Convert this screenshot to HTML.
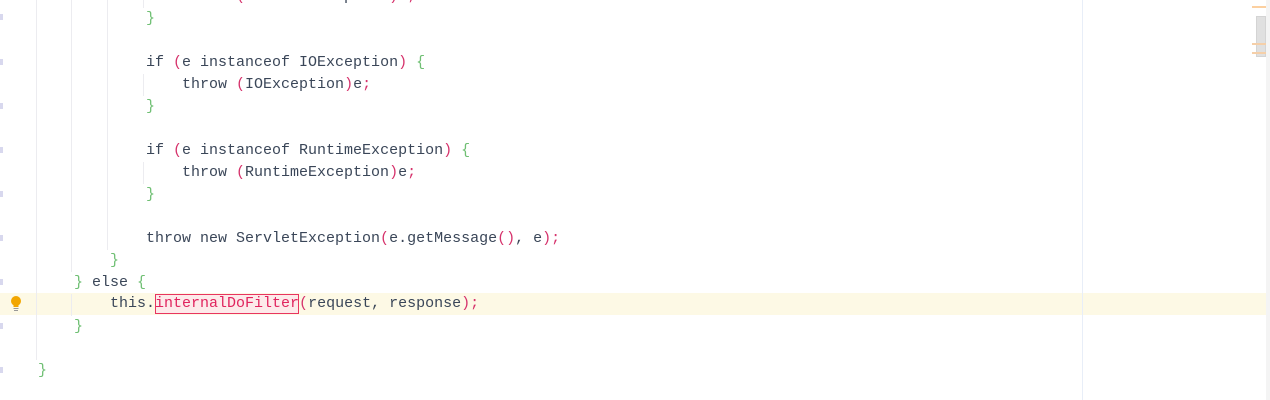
<!DOCTYPE html>
<html><head><style>
body{margin:0;width:1270px;height:400px;background:#fff;overflow:hidden;position:relative;font-family:"Liberation Mono",monospace;font-size:15px;}
.r{position:absolute;left:38px;height:22px;line-height:22px;white-space:pre;color:#3a4658;margin-top:1px}
.p{color:#d6336c}.b{color:#6fbf73}.s{color:#d6336c}
.g{position:absolute;width:1px;background:#ececf0}
.t{position:absolute;left:0;width:3px;height:6px;background:#d8d8ee}
</style></head><body>
<div style="position:absolute;left:0;top:293px;width:1270px;height:22px;background:#fdf9e5"></div>
<div style="position:absolute;left:1082px;top:0;width:1px;height:400px;background:#e8eef8"></div>
<div class="g" style="left:36px;top:0;height:360px"></div>
<div class="g" style="left:71px;top:0;height:272px"></div>
<div class="g" style="left:71px;top:294px;height:22px"></div>
<div class="g" style="left:107px;top:0;height:250px"></div>
<div class="g" style="left:143px;top:0;height:8px"></div>
<div class="g" style="left:143px;top:74px;height:22px"></div>
<div class="g" style="left:143px;top:162px;height:22px"></div>
<div class="t" style="top:14px"></div><div class="t" style="top:59px"></div><div class="t" style="top:103px"></div><div class="t" style="top:147px"></div><div class="t" style="top:191px"></div><div class="t" style="top:235px"></div><div class="t" style="top:279px"></div><div class="t" style="top:323px"></div><div class="t" style="top:367px"></div>

<div class="r" style="top:-15px;padding-left:144px">throw <span class="p">(</span>ServletException<span class="p">)</span>e<span class="s">;</span></div>
<div class="r" style="top:7px;padding-left:108px"><span class="b">}</span></div>
<div class="r" style="top:51px;padding-left:108px">if <span class="p">(</span>e instanceof IOException<span class="p">)</span> <span class="b">{</span></div>
<div class="r" style="top:73px;padding-left:144px">throw <span class="p">(</span>IOException<span class="p">)</span>e<span class="s">;</span></div>
<div class="r" style="top:95px;padding-left:108px"><span class="b">}</span></div>
<div class="r" style="top:139px;padding-left:108px">if <span class="p">(</span>e instanceof RuntimeException<span class="p">)</span> <span class="b">{</span></div>
<div class="r" style="top:161px;padding-left:144px">throw <span class="p">(</span>RuntimeException<span class="p">)</span>e<span class="s">;</span></div>
<div class="r" style="top:183px;padding-left:108px"><span class="b">}</span></div>
<div class="r" style="top:227px;padding-left:108px">throw new ServletException<span class="p">(</span>e.getMessage<span class="p">()</span>, e<span class="p">)</span><span class="s">;</span></div>
<div class="r" style="top:249px;padding-left:72px"><span class="b">}</span></div>
<div class="r" style="top:271px;padding-left:36px"><span class="b">}</span> else <span class="b">{</span></div>
<div class="r" style="top:292px;padding-left:72px">this.<span style="color:#e0245e;background:#fdeaea;outline:1px solid #e8355f;outline-offset:-1px;display:inline-block;height:20px;line-height:20px;vertical-align:top;margin-top:1px">internalDoFilter</span><span class="p">(</span>request, response<span class="p">)</span><span class="s">;</span></div>
<div class="r" style="top:315px;padding-left:36px"><span class="b">}</span></div>
<div class="r" style="top:359px;padding-left:0"><span class="b">}</span></div>

<svg style="position:absolute;left:9px;top:295px" width="14" height="18" viewBox="0 0 14 18"><circle cx="7" cy="6" r="5" fill="#f2a600"/><rect x="4.5" y="10" width="5" height="2" fill="#f2a600"/><rect x="4.5" y="13" width="5" height="1" fill="#999"/><rect x="5" y="15" width="4" height="1" fill="#999"/></svg>

<div style="position:absolute;left:1266px;top:0;width:4px;height:400px;background:#f4f4f4"></div>
<div style="position:absolute;left:1256px;top:16px;width:10px;height:41px;background:#e0e0e0;border:1px solid #d4d4d4;box-sizing:border-box"></div>
<div style="position:absolute;left:1252px;top:6px;width:14px;height:2px;background:#fcd0a0"></div>
<div style="position:absolute;left:1252px;top:43px;width:14px;height:2px;background:#f5cfa8"></div>
<div style="position:absolute;left:1252px;top:52px;width:14px;height:2px;background:#f5cfa8"></div>
</body></html>
